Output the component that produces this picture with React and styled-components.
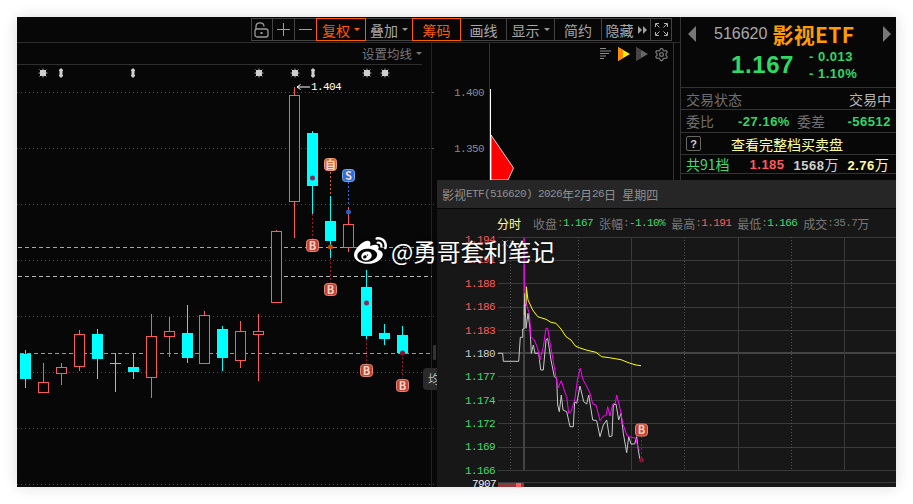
import React from "react";
import styled, { createGlobalStyle } from "styled-components";
import { FaWeibo } from "react-icons/fa";
import { Settings } from "lucide-react";

const CJK = '"Noto Sans CJK SC", "Liberation Sans", sans-serif';
const SANS = '"Liberation Sans", "Noto Sans CJK SC", sans-serif';
const MONO = '"Liberation Mono", monospace';
const RED = "#ff5a5a";
const CYAN = "#00ffff";
const GREEN = "#3fdc6e";

const GlobalStyle = createGlobalStyle`
  html, body { margin: 0; background: #fff; }
  body { padding: 17px; width: 913px; height: 504px; box-sizing: border-box; overflow: hidden; font-family: ${CJK}; }
`;

const Window = styled.div`
  position: relative;
  width: 879px;
  height: 470px;
  display: flex;
  background: #070707;
  box-shadow: 0 0 14px rgba(0, 0, 0, 0.14);
  overflow: hidden;
`;

const Main = styled.div`
  width: 663px;
  display: flex;
  flex-direction: column;
  flex: none;
`;

const Toolbar = styled.div`
  height: 25px;
  flex: none;
  display: flex;
  justify-content: flex-end;
  padding: 1px 8px 1px 0;
  box-sizing: border-box;
`;

const ToolButton = styled.div`
  width: ${(p) => p.$w}px;
  margin-left: -1px;
  box-sizing: border-box;
  display: flex;
  align-items: center;
  justify-content: center;
  gap: 4px;
  font-size: 14px;
  line-height: 20px;
  position: relative;
  z-index: ${(p) => (p.$active ? 1 : 0)};
  color: ${(p) => (p.$active ? "#ff5a00" : "#a8a8a8")};
  border: 1px solid ${(p) => (p.$active ? "#ff5a00" : "#444")};
`;

const Caret = styled.i`
  width: 0;
  height: 0;
  flex: none;
  border-left: 3px solid transparent;
  border-right: 3px solid transparent;
  border-top: 3px solid ${(p) => p.$color || "#999"};
`;

const Body = styled.div`
  flex: 1;
  display: flex;
  border-top: 1px solid #2c2c2c;
  min-height: 0;
`;

const LeftPanel = styled.div`
  width: 415px;
  flex: none;
  display: flex;
  flex-direction: column;
  border-right: 1px solid #222;
  box-sizing: border-box;
`;

const PanelHead = styled.div`
  height: 22px;
  flex: none;
  display: flex;
  align-items: center;
  justify-content: flex-end;
  box-sizing: border-box;
`;

const MaHead = styled(PanelHead)`
  width: 405px;
  gap: 4px;
  color: #777;
  font-size: 12.5px;
  border-bottom: 1px solid #2e2e2e;
`;

const MidPanel = styled.div`
  width: 242px;
  flex: none;
  box-sizing: border-box;
  display: flex;
  flex-direction: column;
  border-right: 1px solid #333;
`;

const MidIcons = styled(PanelHead)`
  gap: 6px;
  padding-right: 4px;
`;

const ChartSvg = styled.svg`
  display: block;
  flex: 1;
  min-height: 0;
  width: 100%;
  overflow: visible;
  font-family: ${MONO};
`;

const Quote = styled.div`
  flex: 1;
  display: flex;
  flex-direction: column;
  border-left: 1px solid #333;
  color: #bbb;
`;

const QuoteHead = styled.div`
  height: 71px;
  flex: none;
  box-sizing: border-box;
  border-bottom: 1px solid #333;
`;

const TitleRow = styled.div`
  height: 34px;
  display: flex;
  align-items: center;
  padding: 0 5px 0 7px;
`;

const Arrow = styled.i`
  width: 0;
  height: 0;
  flex: none;
  border-top: 8px solid transparent;
  border-bottom: 8px solid transparent;
  ${(p) => (p.$right ? "border-left: 8px solid #777;" : "border-right: 8px solid #777;")}
`;

const Title = styled.div`
  flex: 1;
  display: flex;
  align-items: center;
  gap: 5px;
  padding-left: 18px;
`;

const Code = styled.span`
  font: 16px ${SANS};
  color: #a9a9a9;
`;

const Name = styled.span`
  font: 700 21px ${CJK};
  letter-spacing: 0.3px;
  color: #ff9a00;
`;

const PriceRow = styled.div`
  display: flex;
  align-items: center;
  gap: 15px;
  padding-left: 50px;
  margin-top: -3px;
`;

const BigPrice = styled.span`
  font: 700 24px ${SANS};
  letter-spacing: 0.6px;
  color: #2fd864;
`;

const Deltas = styled.div`
  display: flex;
  flex-direction: column;
  font: 700 13px/17px ${SANS};
  letter-spacing: 0.5px;
  color: #2fd864;
  white-space: pre;
`;

const QuoteRow = styled.div`
  height: ${(p) => p.$h}px;
  flex: none;
  box-sizing: border-box;
  display: flex;
  align-items: center;
  justify-content: space-between;
  padding: 0 5px;
  font-size: 14px;
  border-bottom: 1px solid #333;
  white-space: nowrap;
`;

const RatioRow = styled(QuoteRow)`
  justify-content: flex-start;
  gap: 7px;
  & > :first-child {
    margin-right: 17px;
  }
  & > :last-child {
    margin-left: auto;
  }
`;

const Dim = styled.span`
  color: #6f6f6f;
`;

const Light = styled.span`
  color: #b5b5b5;
`;

const Bold = styled.span`
  font: 700 13px ${SANS};
  letter-spacing: 0.5px;
  color: ${(p) => p.$color};
  & em {
    font: 400 14px ${CJK};
    letter-spacing: 0;
  }
`;

const HelpBox = styled.span`
  width: 15px;
  height: 15px;
  box-sizing: border-box;
  border: 1px solid #666;
  border-radius: 2px;
  display: flex;
  align-items: center;
  justify-content: center;
  font: 700 11px ${SANS};
  color: #ccc;
`;

const BookLink = styled.span`
  flex: 1;
  color: #ffff9a;
  padding-left: 30px;
  font-size: 14px;
`;

const Levels = styled(QuoteRow)`
  padding: 0 7px 0 5px;
  gap: 9px;
  justify-content: flex-start;
`;

const LevelCount = styled.span`
  color: ${GREEN};
  margin-right: 11px;
`;

const Popup = styled.div`
  position: absolute;
  left: 420px;
  top: 163px;
  right: 0;
  bottom: 0;
  background: #171717;
  z-index: 2;
  display: flex;
  flex-direction: column;
`;

const PopupHead = styled.div`
  height: 29px;
  flex: none;
  box-sizing: border-box;
  display: flex;
  align-items: center;
  padding-left: 5px;
  background: #262626;
  border-bottom: 1px solid #050505;
  font-size: 12px;
  color: #8f8f8f;
  white-space: pre;
`;

const Ascii = styled.span`
  font: 11px ${MONO};
  letter-spacing: -0.6px;
`;

const Stats = styled.div`
  height: 28px;
  flex: none;
  display: flex;
  align-items: center;
  padding-left: 60px;
  font-size: 12px;
  color: #777;
  white-space: pre;
`;

const PeriodTab = styled.span`
  color: #ffff8c;
  margin-right: 12px;
`;

const StatValue = styled(Ascii)`
  color: ${(p) => p.$color};
`;

const SideTab = styled.div`
  position: absolute;
  left: 406px;
  top: 351px;
  width: 20px;
  height: 22px;
  box-sizing: border-box;
  padding-left: 5px;
  border-radius: 4px;
  background: #2a2a2a;
  color: #bbb;
  font-size: 12px;
  line-height: 22px;
  white-space: nowrap;
  z-index: 1;
`;

const SideGrip = styled.div`
  position: absolute;
  left: 416px;
  top: 328px;
  width: 3px;
  height: 15px;
  border-radius: 1px;
  background: #333;
  z-index: 1;
`;

const Watermark = styled.div`
  position: absolute;
  left: 337px;
  top: 217px;
  display: flex;
  align-items: center;
  gap: 4px;
  color: #fff;
  font: 23.6px ${CJK};
  white-space: nowrap;
  text-shadow: 0 0 3px rgba(0, 0, 0, 0.75);
  z-index: 5;
  & svg {
    filter: drop-shadow(0 0 2px rgba(0, 0, 0, 0.7));
  }
`;

const candles = [
  { x: 20, t: 354, b: 379, h: 350, l: 388 },
  { x: 38, t: 382, b: 393, h: 363, l: 393, up: 1 },
  { x: 56, t: 367, b: 374, h: 363, l: 385, up: 1 },
  { x: 74, t: 334, b: 367, h: 330, l: 371, up: 1 },
  { x: 92, t: 334, b: 359, h: 329, l: 379 },
  { x: 110, t: 363, b: 364, h: 353, l: 392 },
  { x: 128, t: 367, b: 372, h: 354, l: 379 },
  { x: 146, t: 336, b: 378, h: 314, l: 398, up: 1 },
  { x: 164, t: 331, b: 337, h: 317, l: 357, up: 1 },
  { x: 182, t: 333, b: 358, h: 305, l: 363 },
  { x: 199, t: 315, b: 364, h: 311, l: 364, up: 1 },
  { x: 217, t: 329, b: 358, h: 326, l: 371 },
  { x: 235, t: 331, b: 361, h: 321, l: 368, up: 1 },
  { x: 253, t: 331, b: 335, h: 314, l: 381, up: 1 },
  { x: 271, t: 231, b: 303, h: 230, l: 303, up: 1 },
  { x: 289, t: 95, b: 202, h: 87, l: 238, up: 1 },
  { x: 307, t: 133, b: 186, h: 131, l: 214 },
  { x: 325, t: 221, b: 241, h: 196, l: 258 },
  { x: 343, t: 224, b: 248, h: 207, l: 252, up: 1 },
  { x: 361, t: 287, b: 336, h: 270, l: 339 },
  { x: 379, t: 333, b: 339, h: 324, l: 345 },
  { x: 397, t: 335, b: 353, h: 326, l: 353 },
];

const Candle = ({ x, t, b, h, l, up }) => {
  const mid = x + 5.5;
  if (up) {
    return (
      <g stroke={RED} fill="#070707">
        <path d={`M${mid} ${h}V${l}`} />
        <rect x={x + 0.5} y={t + 0.5} width={10} height={b - t - 1} />
      </g>
    );
  }
  return (
    <g>
      <path d={`M${mid} ${h}V${l}`} stroke={CYAN} />
      <rect x={x} y={t} width={11} height={b - t} fill={CYAN} />
    </g>
  );
};

const Badge = ({ x, y, fill, edge, children }) => (
  <g>
    <rect x={x - 6} y={y - 6} width={12} height={12} rx={3} fill={fill} stroke={edge} />
    <text x={x} y={y + 4} textAnchor="middle" fill="#f6d8d0" fontSize="11" fontWeight="700" fontFamily={CJK}>
      {children}
    </text>
  </g>
);

const Star = ({ x }) => (
  <g fill="#cfcfcf" stroke="#cfcfcf">
    <rect x={x - 3} y={70} width={6} height={6} strokeWidth="0" />
    <path d={`M${x} 68.5V77.5M${x - 4.5} 73H${x + 4.5}M${x - 3.5} 69.5L${x + 3.5} 76.5M${x + 3.5} 69.5L${x - 3.5} 76.5`} strokeWidth="0.8" />
  </g>
);

const Updown = ({ x }) => (
  <path d={`M${x} 68L${x + 2} 70V71H${x + 1.5}V75H${x + 2}V76L${x} 78L${x - 2} 76V75H${x - 1.5}V71H${x - 2}V70Z`} fill="#cfcfcf" />
);

const KChart = () => (
  <ChartSvg viewBox="17 65 414 422" preserveAspectRatio="xMinYMin meet">
    {[92, 148, 204, 260, 316, 372, 428, 484].map((y) => (
      <path key={y} d={`M17 ${y}.5H434`} stroke="#4c4c4c" strokeDasharray="1 3" />
    ))}
    <path d="M18 247.5H432" stroke="#ff8c3c" strokeDasharray="4 3" />
    <path d="M18 276.5H432" stroke="#b5b5b5" strokeDasharray="4 3" />
    <path d="M20 353.5H432" stroke="#c8a000" strokeDasharray="4 3" />
    {[43, 259, 295, 367, 385].map((x) => <Star key={x} x={x} />)}
    {[61, 133, 313].map((x) => <Updown key={x} x={x} />)}
    {candles.map((c) => <Candle key={c.x} {...c} />)}
    <path d="M297 87H310M300.5 84.5L297 87L300.5 89.5" stroke="#fff" fill="none" />
    <text x="311" y="90" fill="#fff" fontSize="11" letterSpacing="-0.6">1.404</text>
    <path d="M312.5 214V240M330.5 258V283M366.5 339V364M402.5 353V378" stroke="#a0122f" strokeDasharray="2 2" />
    <path d="M330.5 172V196" stroke="#e05a10" strokeDasharray="2 2" />
    <path d="M348.5 182V206" stroke="#2a70e0" strokeDasharray="2 2" />
    <circle cx="312.5" cy="178" r="2.5" fill="#8c2a5a" />
    <circle cx="366.5" cy="303" r="2.5" fill="#8c2a5a" />
    <circle cx="402.5" cy="353" r="2.5" fill="#8a1030" />
    <circle cx="330.5" cy="247" r="2.5" fill="#c84a00" />
    <circle cx="348.5" cy="212" r="2.5" fill="#2a60c0" />
    <Badge x={312.5} y={245.5} fill="#c8402f" edge="#e08878">B</Badge>
    <Badge x={330.5} y={289.5} fill="#c8402f" edge="#e08878">B</Badge>
    <Badge x={366.5} y={370.5} fill="#c8402f" edge="#e08878">B</Badge>
    <Badge x={402.5} y={385.5} fill="#c8402f" edge="#e08878">B</Badge>
    <Badge x={330.5} y={164.5} fill="#d8622a" edge="#eea070">自</Badge>
    <Badge x={348.5} y={175.5} fill="#2a70d8" edge="#78a8f0">S</Badge>
  </ChartSvg>
);

const DepthChart = () => (
  <ChartSvg viewBox="432 65 241 422" preserveAspectRatio="xMinYMin meet">
    <path d="M432 92.5H434M432 148.5H434" stroke="#555" />
    <path d="M489.5 43V487" stroke="#333" />
    <text x="454" y="96" fill="#8a8a8a" fontSize="11" letterSpacing="-0.6">1.400</text>
    <text x="454" y="152" fill="#8a8a8a" fontSize="11" letterSpacing="-0.6">1.350</text>
    <path d="M490.5 89V180" stroke="#fff" />
    <path d="M491 135L513.5 168L508 180H491Z" fill="#ff0000" stroke="#fff" strokeWidth="0.8" />
  </ChartSvg>
);

const pts = (list) => list.map(([x, y]) => `${(436 + x / 3).toFixed(1)},${(260 + y / 3).toFixed(1)}`).join(" ");

const grayLine = [[185,280],[200,280],[202,304],[248,304],[253,232],[260,232],[260,207],[264,207],[266,100],[270,205],[276,160],[282,205],[286,280],[292,255],[297,280],[308,280],[314,330],[322,330],[330,240],[335,235],[345,300],[355,350],[362,355],[365,435],[370,455],[376,405],[381,450],[392,455],[402,500],[412,500],[416,425],[422,430],[432,378],[443,425],[452,432],[458,405],[470,480],[482,482],[492,530],[502,495],[512,480],[520,530],[528,528],[532,435],[540,432],[548,480],[555,460],[562,520],[572,578],[578,530],[585,552],[596,552],[602,530],[607,570],[612,600]];
const avgLine = [[265,-65],[265,65],[270,130],[280,160],[285,230],[295,240],[305,265],[312,300],[322,260],[330,205],[335,205],[345,265],[355,320],[365,385],[376,362],[386,395],[392,410],[398,460],[405,455],[416,420],[425,355],[433,325],[440,357],[450,375],[462,400],[470,432],[480,435],[492,482],[502,468],[510,467],[515,440],[522,468],[530,432],[538,430],[542,405],[552,445],[560,490],[572,525],[580,530],[600,535],[606,565],[612,572]];
const slowLine = [[265,165],[265,135],[271,135],[271,80],[276,120],[290,150],[305,170],[330,178],[345,187],[360,190],[375,207],[390,230],[405,240],[418,258],[430,263],[450,270],[480,277],[497,290],[520,293],[555,299],[580,309],[600,315],[615,317]];

const axis = [
  ["1.194", 243, RED], ["1.191", 263, RED], ["1.188", 287, RED], ["1.186", 310, RED], ["1.183", 334, RED],
  ["1.180", 357, "#cccccc"], ["1.177", 380, GREEN], ["1.174", 404, GREEN], ["1.172", 427, GREEN],
  ["1.169", 450, GREEN], ["1.166", 474, GREEN],
];

const TimeChart = () => (
  <ChartSvg viewBox="437 237 459 250">
    {[237, 260, 283, 307, 330, 376, 400, 423, 447, 470, 482].map((y) => (
      <path key={y} d={`M498 ${y}.5H896`} stroke="#3a3a3a" />
    ))}
    <path d="M498 353H896" stroke="#444" strokeWidth="2" />
    {[631, 738, 844].map((x) => <path key={x} d={`M${x}.5 237V470`} stroke="#3a3a3a" />)}
    {[510, 578, 684, 791].map((x) => <path key={x} d={`M${x}.5 237V470`} stroke="#555" strokeDasharray="1 2" />)}
    <path d="M524 237V470" stroke="#444" strokeWidth="2" />
    <path d="M502 240L508 246M508 240L502 246" stroke="#666" />
    {axis.map(([label, y, color]) => (
      <text key={label} x="465" y={y} fill={color} fontSize="11" letterSpacing="-0.6">{label}</text>
    ))}
    <text x="472" y="487" fill="#eee" fontSize="11" letterSpacing="-0.6">7907</text>
    <rect x="498" y="483" width="26" height="4" fill="#8a3a3a" />
    <rect x="516" y="483" width="5" height="4" fill={RED} />
    <polyline points={pts(slowLine)} fill="none" stroke="#ffff00" />
    <polyline points={pts(grayLine)} fill="none" stroke="#c8c8c8" />
    <polyline points={pts(avgLine)} fill="none" stroke="#ff00ff" />
    <path d="M641.5 436V458" stroke="#a0122f" strokeDasharray="2 2" />
    <circle cx="641.5" cy="460" r="2.5" fill="#8a1030" />
    <Badge x={641.5} y={430} fill="#c8402f" edge="#e08878">B</Badge>
  </ChartSvg>
);

const LockIcon = () => (
  <svg width="16" height="16" viewBox="0 0 16 16" fill="none" stroke="#9a9a9a" strokeWidth="1.3">
    <path d="M2 7V4.5C2 2 3.5 .8 6 .8S10 2 10 4.5" />
    <rect x="1" y="7" width="13" height="8" rx="2" />
    <rect x="6.5" y="10" width="2" height="2" fill="#9a9a9a" stroke="none" />
  </svg>
);

const LineIcon = ({ d }) => (
  <svg width="13" height="13" viewBox="0 0 13 13" fill="none" stroke="#a0a0a0">
    <path d={d} />
  </svg>
);

const FullIcon = () => (
  <svg width="13" height="13" viewBox="0 0 13 13" fill="none" stroke="#b0b0b0">
    <path d="M.5 4V.5H4M9 .5H12.5V4M12.5 9V12.5H9M4 12.5H.5V9M1 1L4.5 4.5M12 1L8.5 4.5M12 12L8.5 8.5M1 12L4.5 8.5" />
  </svg>
);

const DoubleArrow = () => (
  <svg width="9" height="8" viewBox="0 0 9 8" fill="#a0a0a0">
    <path d="M0 0L4 4L0 8ZM5 0L9 4L5 8Z" />
  </svg>
);

const ListIcon = () => (
  <svg width="12" height="12" viewBox="0 0 12 12" stroke="#8a8a8a">
    <path d="M0 .5H6M0 3H11M0 5.5H9M0 8H6M0 10.5H4" />
  </svg>
);

const PlayIcon = ({ fill, edge }) => (
  <svg width="12" height="14" viewBox="0 0 12 14">
    <path d="M0 0L12 7L0 14Z" fill={fill} />
    <path d="M0 0L5 3V11L0 14Z" fill={edge} />
  </svg>
);

export default function App() {
  return (
    <>
      <GlobalStyle />
      <Window>
        <Main>
          <Toolbar>
            <ToolButton $w={22}><LockIcon /></ToolButton>
            <ToolButton $w={23}><LineIcon d="M6.5 0V13M0 6.5H13" /></ToolButton>
            <ToolButton $w={23}><LineIcon d="M0 6.5H13" /></ToolButton>
            <ToolButton $w={50} $active>复权<Caret $color="#ff5a00" /></ToolButton>
            <ToolButton $w={48}>叠加<Caret /></ToolButton>
            <ToolButton $w={49} $active>筹码</ToolButton>
            <ToolButton $w={47}>画线</ToolButton>
            <ToolButton $w={49}>显示<Caret /></ToolButton>
            <ToolButton $w={48}>简约</ToolButton>
            <ToolButton $w={50}>隐藏<DoubleArrow /></ToolButton>
            <ToolButton $w={22}><FullIcon /></ToolButton>
          </Toolbar>
          <Body>
            <LeftPanel>
              <MaHead>设置均线<Caret $color="#777" /></MaHead>
              <KChart />
            </LeftPanel>
            <MidPanel>
              <MidIcons>
                <ListIcon />
                <PlayIcon fill="#ffee00" edge="#ff8a00" />
                <PlayIcon fill="#666" edge="#444" />
                <Settings size={15} color="#777" />
              </MidIcons>
              <DepthChart />
            </MidPanel>
          </Body>
        </Main>
        <Quote>
          <QuoteHead>
            <TitleRow>
              <Arrow />
              <Title><Code>516620</Code><Name>影视ETF</Name></Title>
              <Arrow $right />
            </TitleRow>
            <PriceRow>
              <BigPrice>1.167</BigPrice>
              <Deltas><span>- 0.013</span><span>- 1.10%</span></Deltas>
            </PriceRow>
          </QuoteHead>
          <QuoteRow $h={22}><Dim>交易状态</Dim><Light>交易中</Light></QuoteRow>
          <RatioRow $h={23}>
            <Dim>委比</Dim>
            <Bold $color="#2fd864">-27.16%</Bold>
            <Dim>委差</Dim>
            <Bold $color="#2fd864">-56512</Bold>
          </RatioRow>
          <QuoteRow $h={22}>
            <HelpBox>?</HelpBox>
            <BookLink>查看完整档买卖盘</BookLink>
          </QuoteRow>
          <Levels $h={19}>
            <LevelCount>共91档</LevelCount>
            <Bold $color={RED}>1.185</Bold>
            <Bold $color="#cfcfcf">1568<em>万</em></Bold>
            <Bold $color="#ffff9a">2.76<em>万</em></Bold>
          </Levels>
        </Quote>
        <SideTab>均线</SideTab>
        <SideGrip />
        <Popup>
          <PopupHead>
            影视<Ascii>ETF(516620) 2026</Ascii>年<Ascii>2</Ascii>月<Ascii>26</Ascii>日<Ascii> </Ascii>星期四
          </PopupHead>
          <Stats>
            <PeriodTab>分时</PeriodTab>
            收盘<Ascii>:</Ascii><StatValue $color={GREEN}>1.167</StatValue><Ascii> </Ascii>
            张幅<Ascii>:</Ascii><StatValue $color={GREEN}>-1.10%</StatValue><Ascii> </Ascii>
            最高<Ascii>:</Ascii><StatValue $color={RED}>1.191</StatValue><Ascii> </Ascii>
            最低<Ascii>:</Ascii><StatValue $color={GREEN}>1.166</StatValue><Ascii> </Ascii>
            成交<Ascii>:</Ascii><StatValue $color="#777">35.7</StatValue>万
          </Stats>
          <TimeChart />
        </Popup>
        <Watermark>
          <FaWeibo size={33} />
          <span>@勇哥套利笔记</span>
        </Watermark>
      </Window>
    </>
  );
}
